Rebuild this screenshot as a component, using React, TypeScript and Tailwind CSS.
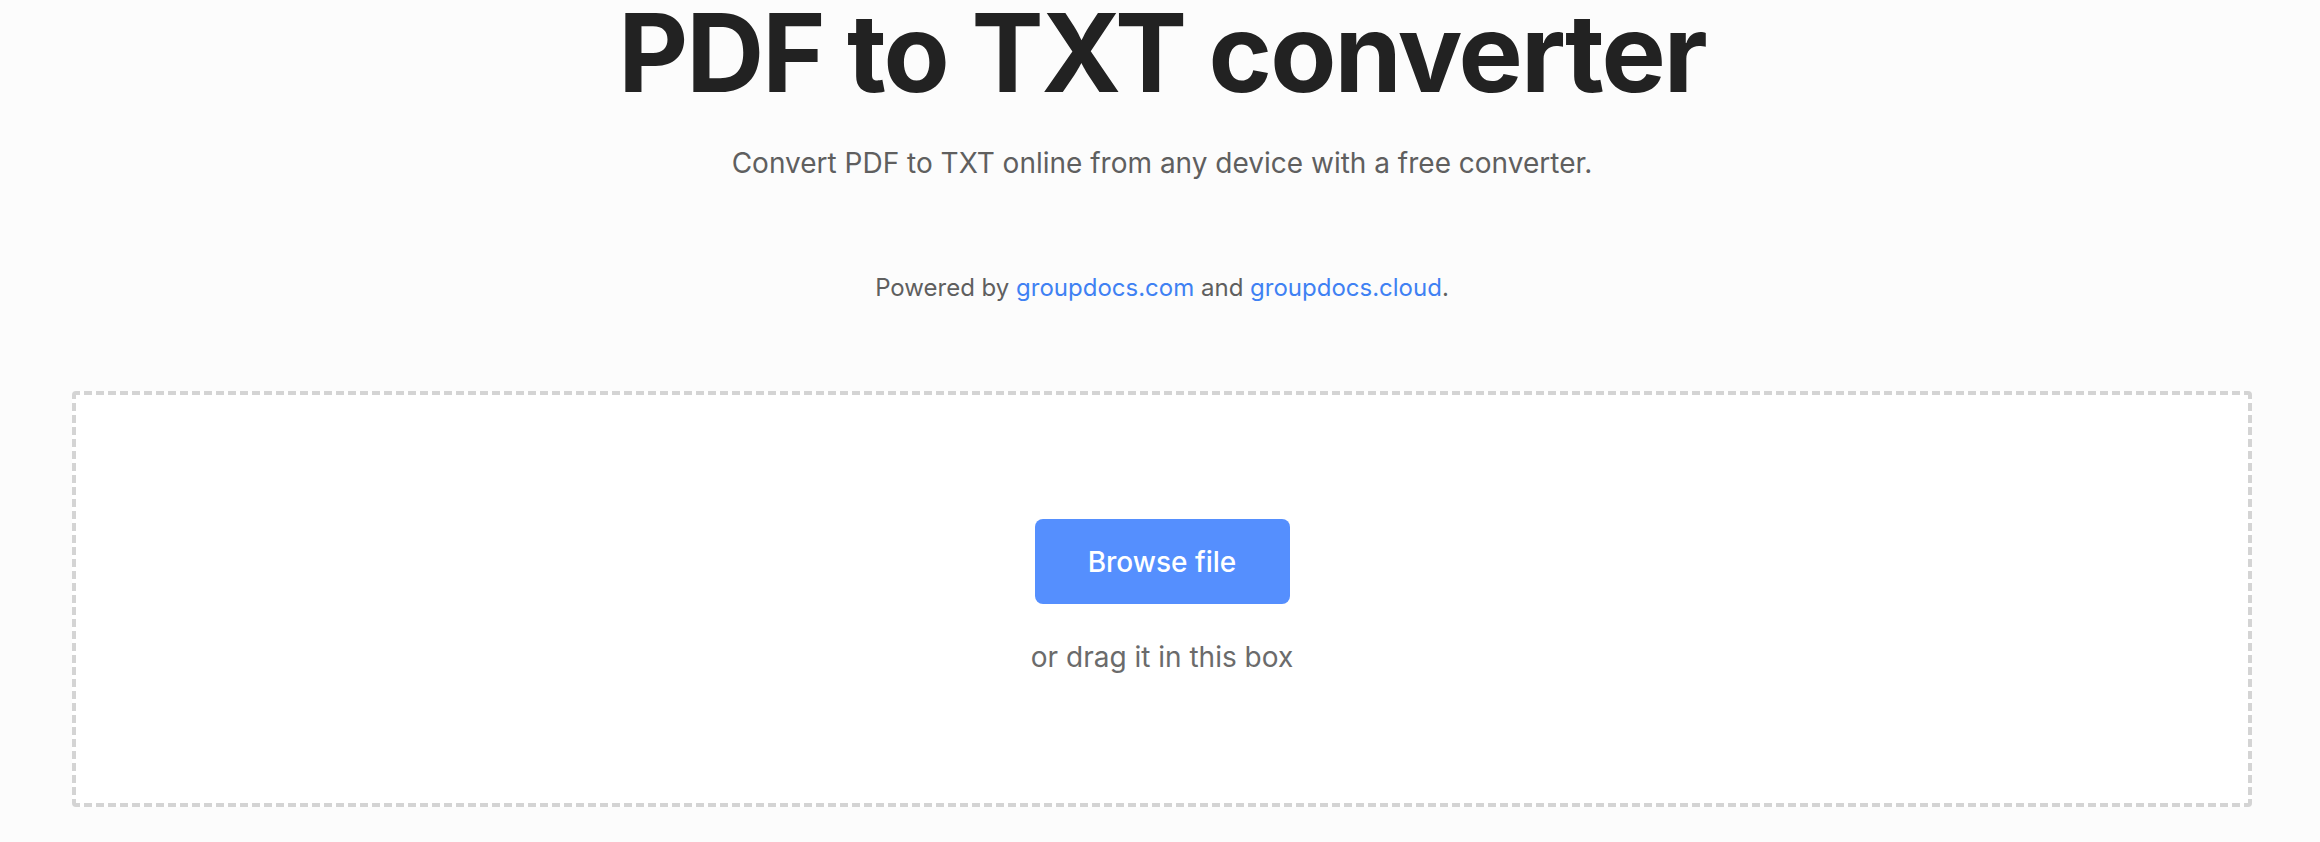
export default function App() {
  return (
    <div className="min-h-screen bg-[#fcfcfc] font-['Inter',sans-serif]">
      <div className="pl-[72px] pr-[68px] flex flex-col items-center">
        <h1 className="text-[108px] leading-[106px] font-bold tracking-[-2px] text-[#222222] whitespace-nowrap">
          PDF to TXT converter
        </h1>
        <p className="mt-[36px] text-[28px] leading-[42px] text-[#5f5f5f]">
          Convert PDF to TXT online from any device with a free converter.
        </p>
        <p className="mt-[87px] text-[24px] leading-[34px] text-[#5f5f5f]">
          Powered by{" "}
          <a href="#" className="text-[#3f81f3]">groupdocs.com</a> and{" "}
          <a href="#" className="text-[#3f81f3]">groupdocs.cloud</a>.
        </p>
        <div className="mt-[86px] w-full h-[416px] border-4 border-dashed border-[#d4d4d4] rounded bg-white flex flex-col items-center pt-[124px]">
          <button className="w-[255px] h-[85px] rounded-lg bg-[#558ffe] text-white text-[28px] font-medium leading-none">
            Browse file
          </button>
          <p className="mt-[33px] text-[28px] leading-[40px] text-[#6b6b6b]">
            or drag it in this box
          </p>
        </div>
      </div>
    </div>
  );
}
